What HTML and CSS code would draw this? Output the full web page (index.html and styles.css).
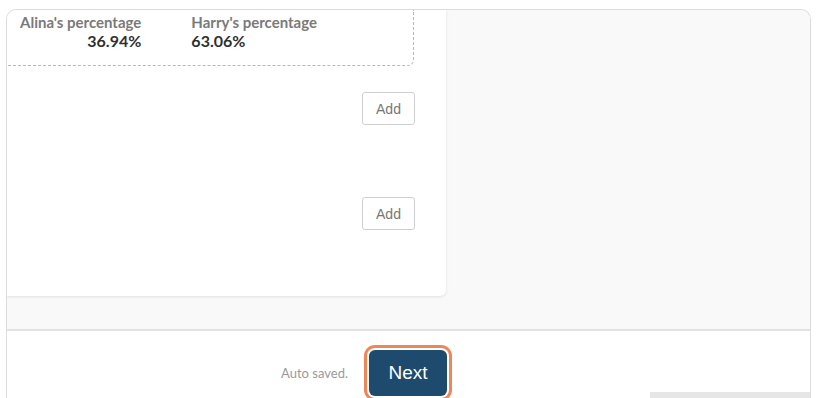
FILE: index.html
```html
<!DOCTYPE html>
<html>
<head>
<meta charset="utf-8">
<link rel="stylesheet" href="styles.css">
</head>
<body>
<div class="frame">
  <div class="main">
    <div class="card">
      <div class="split">
        <div class="col col-right">
          <div class="label">Alina's percentage</div>
          <div class="value">36.94%</div>
        </div>
        <div class="col">
          <div class="label">Harry's percentage</div>
          <div class="value">63.06%</div>
        </div>
      </div>
      <div class="add-row first"><button class="add">Add</button></div>
      <div class="add-row second"><button class="add">Add</button></div>
    </div>
  </div>
  <div class="footer">
    <div class="footer-inner">
      <span class="saved">Auto saved.</span>
      <button class="next">Next</button>
    </div>
    <div class="scrollbar"></div>
  </div>
</div>
</body>
</html>
```
FILE: styles.css
```css
html, body {
  margin: 0;
  padding: 0;
  background: #ffffff;
  overflow: hidden;
  height: 398px;
}
.frame {
  margin: 9px 0 0 6px;
  width: 803px;
  height: 400px;
  border: 1px solid #dcdcdc;
  border-bottom: none;
  border-radius: 10px 10px 0 0;
  overflow: hidden;
  background: #f9f9f9;
  display: flex;
  flex-direction: column;
}
.main {
  height: 319px;
  background: #f9f9f9;
}
.card {
  width: 439px;
  height: 286px;
  background: #ffffff;
  border-radius: 0 0 6px 0;
  box-shadow: 0 1px 3px rgba(0, 0, 0, 0.10);
  overflow: hidden;
}
.split {
  width: 393px;
  height: 55px;
  padding-left: 13px;
  border-right: 1px dashed #a8bccc;
  border-bottom: 1px dashed #a8bccc;
  border-bottom-right-radius: 6px;
  display: flex;
  gap: 50px;
  font-family: "Lato", "Open Sans", sans-serif;
}
.col {
  display: flex;
  flex-direction: column;
  padding-top: 3px;
}
.col-right {
  align-items: flex-end;
}
.label {
  font-size: 15px;
  font-weight: 700;
  color: #7a7a7a;
  line-height: 19px;
}
.value {
  font-size: 16px;
  font-weight: 700;
  color: #2f2f2f;
  line-height: 18px;
}
.add-row {
  display: flex;
  justify-content: flex-end;
  padding-right: 31px;
}
.add-row.first {
  margin-top: 26px;
}
.add-row.second {
  margin-top: 72px;
}
.add {
  width: 53px;
  height: 33px;
  background: #ffffff;
  border: 1px solid #cfcfcf;
  border-radius: 3px;
  font-family: "Liberation Sans", Arial, sans-serif;
  font-size: 14px;
  color: #777777;
  padding: 0;
}
.footer {
  position: relative;
  flex: 1;
  background: #ffffff;
  border-top: 2px solid #e2e2e2;
}
.footer-inner {
  width: 440px;
  display: flex;
  justify-content: flex-end;
  align-items: center;
  gap: 21px;
  padding-top: 19px;
}
.saved {
  font-family: "Lato", "Open Sans", sans-serif;
  font-size: 13px;
  color: #9a9a9a;
}
.next {
  width: 78px;
  height: 46px;
  background: #1e4a6d;
  color: #ffffff;
  border: none;
  border-radius: 6px;
  font-family: "Liberation Sans", Arial, sans-serif;
  font-size: 19px;
  padding: 0;
  box-shadow: 0 0 0 2px #ffffff, 0 0 0 5px #ef8656;
}
.scrollbar {
  position: absolute;
  left: 643px;
  top: 61px;
  width: 160px;
  height: 8px;
  background: #e6e6e6;
}
```
